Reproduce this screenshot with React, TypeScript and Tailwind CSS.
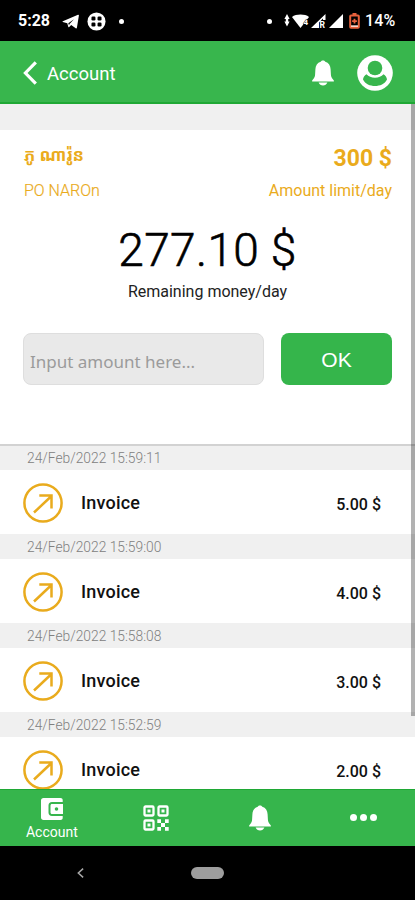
import React from 'react';

const invoices = [
  { date: '24/Feb/2022 15:59:11', amount: '5.00 $' },
  { date: '24/Feb/2022 15:59:00', amount: '4.00 $' },
  { date: '24/Feb/2022 15:58:08', amount: '3.00 $' },
  { date: '24/Feb/2022 15:52:59', amount: '2.00 $' },
];

function BellIcon({ className }: { className?: string }) {
  return (
    <svg viewBox="0 0 22 26" fill="currentColor" className={className}>
      <path d="M11 .4c-1 0-1.800.5-2.300 1.300C5.300 2.700 3.500 5.600 3.400 9.200l-.3 5.300c-.1 2-.7 3.300-2 4.800L.2 20.400c-.4.600-.1 1.200.6 1.200h20.400c.7 0 1-.6.6-1.200l-.9-1.100c-1.300-1.500-1.900-2.800-2-4.800l-.3-5.300c-.1-3.600-1.900-6.500-5.300-7.500C12.800.9 12 .4 11 .4z" />
      <path d="M6.600 22.600h8.800c-.8 1.800-2.400 3-4.400 3s-3.600-1.200-4.400-3z" />
    </svg>
  );
}

function StatusBar() {
  return (
    <div className="h-[41px] shrink-0 bg-black text-white flex items-center justify-between pt-px pl-[18px] pr-[19px]">
      <div className="flex items-center">
        <span className="w-[33px] text-base font-bold leading-none">5:28</span>
        <svg viewBox="0 0 17 15" className="ml-[11px] w-[17px] h-[15px]" fill="white">
          <path d="M.8 7.300 16 .8c.6-.2 1 .1.900.7l-2 12.200c-.1.700-.7.900-1.200.5l-4.500-3.300-2 2c-.4.400-.9.300-1-.3L5.300 9.200.8 8.100c-.5-.2-.5-.6 0-.8z" />
          <path d="M6.300 9.300 12 5.200 7.500 10l-.5 1.600z" fill="black" />
        </svg>
        <svg viewBox="0 0 20 20" className="ml-2 w-[19px] h-[19px]">
          <circle cx="10" cy="10" r="9.500" fill="white" />
          <g fill="black">
            <rect x="4.700" y="4.700" width="4.200" height="4.200" rx="1.300" />
            <rect x="11.100" y="4.700" width="4.200" height="4.200" rx="1.300" />
            <rect x="4.700" y="11.100" width="4.200" height="4.200" rx="1.300" />
            <rect x="11.100" y="11.100" width="4.200" height="4.200" rx="1.300" />
          </g>
        </svg>
        <span className="ml-[13px] w-[5px] h-[5px] rounded-full bg-white" />
      </div>
      <div className="flex items-center">
        <span className="w-[5px] h-[5px] rounded-full bg-white" />
        <svg viewBox="0 0 60 16" className="ml-[12px] w-[60px] h-4" fill="white">
          <path d="M3 1 5.600 6H.4zM3 13.500.4 8.500h5.200zM1.800 5h2.400v5H1.800z" />
          <path d="M8 4C12 .8 21 .8 25 4l-8.500 11z" />
          <text x="19.500" y="12" fontSize="8" fontWeight="700" fontFamily="Roboto, sans-serif" stroke="black" strokeWidth="1" paintOrder="stroke">4</text>
          <path d="M41.500 1v6h-2.500V5.500L35 9.500V15H27z" />
          <text x="35.500" y="15" fontSize="8.500" fontWeight="700" fontFamily="Roboto, sans-serif">R</text>
          <path d="M59 1v14H45z" />
        </svg>
        <svg viewBox="0 0 11 16" className="ml-[5px] w-[11px] h-4" fill="none">
          <path d="M3.500 0h4v2h-4z" fill="#e8613c" />
          <rect x="1.200" y="2.500" width="8.600" height="12.300" rx=".8" stroke="#e8613c" strokeWidth="2" />
          <path d="M5.500 5.800v4.800M3.100 8.200h4.800" stroke="#e8613c" strokeWidth="1.800" />
          <path d="M2 12.300h7v1.700H2z" fill="#f8d5c8" />
        </svg>
        <span className="ml-[5px] w-[31px] text-base font-medium leading-none tracking-[0.2px] whitespace-nowrap">14%</span>
      </div>
    </div>
  );
}

function Header() {
  return (
    <header className="h-[63px] shrink-0 bg-[#38b64d] border-b-2 border-[#1fa835] text-white flex items-center pt-[3px] pl-[23px] pr-[22px]">
      <svg viewBox="0 0 14 24" className="w-[14px] h-6" fill="none" stroke="white" strokeWidth="3.200">
        <path d="M12.800 1.300 2.400 12l10.400 10.700" />
      </svg>
      <h1 className="ml-[10px] mt-0.5 text-[18.5px] leading-none">Account</h1>
      <BellIcon className="ml-auto w-[22px] h-[26px]" />
      <svg viewBox="0 0 36 36" className="ml-[23px] w-9 h-9">
        <circle cx="18" cy="18" r="17.800" fill="white" />
        <circle cx="18" cy="13" r="7.300" fill="#38b64d" />
        <path d="M9.500 19.200c2 2.200 5 3.500 8.500 3.500s6.500-1.300 8.500-3.500c2 1 3.300 3 3.500 5.300C27.800 29 23 31 18 31S8.200 29 6 24.500c.2-2.300 1.500-4.300 3.500-5.300z" fill="#38b64d" />
      </svg>
    </header>
  );
}

function Summary() {
  return (
    <section className="h-[316px] shrink-0 bg-white border-b-2 border-[#d2d2d2] px-[23px] pt-4">
      <div className="flex justify-between text-[#eaab1c]">
        <div className="pl-px">
          <p className="h-6 text-[17px] leading-[18px] font-bold">ភូ ណារ៉ូន</p>
          <p className="mt-[11px] text-base leading-5 font-light [-webkit-text-stroke:0.2px_#eaab1c]">PO NAROn</p>
        </div>
        <div className="text-right">
          <p className="h-6 pt-px text-[23px] leading-6 font-bold">300 $</p>
          <p className="mt-[11px] text-base leading-5">Amount limit/day</p>
        </div>
      </div>
      <div className="text-center text-black">
        <p className="mt-[22px] text-[46px] leading-[54px] font-light tracking-[0.4px] [-webkit-text-stroke:0.6px_black]">277.10 $</p>
        <p className="mt-[5px] text-[16px] leading-5 text-[#222]">Remaining money/day</p>
      </div>
      <div className="mt-[31px] flex justify-between">
        <input
          type="text"
          placeholder="Input amount here..."
          className="w-[241px] h-[52px] rounded-lg border border-[#dedede] bg-[#e9e9e9] px-[6px] pt-1 font-['Noto_Sans',sans-serif] text-[17px] placeholder:text-[#9b9b9b] outline-none"
        />
        <button className="w-[111px] h-[52px] rounded-lg bg-[#35b54b] text-white font-['Liberation_Sans',sans-serif] text-[21px] pt-0.5">
          OK
        </button>
      </div>
    </section>
  );
}

function InvoiceRow({ date, amount }: { date: string; amount: string }) {
  return (
    <li className="shrink-0">
      <div className="h-[25px] pl-[27px] text-[13.8px] leading-[26px] font-light text-[#808080]">{date}</div>
      <div className="h-16 bg-white flex items-center pl-[23px] pr-[34px]">
        <svg viewBox="0 0 40 40" className="mt-0.5 w-10 h-10" fill="none" stroke="#e9ab1d">
          <circle cx="20" cy="20" r="18.600" strokeWidth="2.500" />
          <path d="M11 29.500 28.500 13M16.300 12.500h12.200v13" strokeWidth="2.500" />
        </svg>
        <span className="ml-[18px] text-[18px] tracking-[0.2px] font-medium text-[#111]">Invoice</span>
        <span className="ml-auto mt-[5px] text-base font-medium text-[#111]">{amount}</span>
      </div>
    </li>
  );
}

function BottomNav() {
  return (
    <nav className="h-[57px] shrink-0 bg-[#36b54c] border-t border-[#1fa835] text-white grid grid-cols-4">
      <div className="flex flex-col items-center pt-[7px]">
        <svg viewBox="0 0 24 24" className="w-6 h-6" fill="white">
          <path d="M3.500 1h17c1.300 0 2.200.8 2.200 2v2H12c-2.200 0-3.500 1.400-3.500 3.500v7c0 2.100 1.300 3.500 3.500 3.500h10.700v2c0 1.200-.9 2-2.200 2h-17C2 23 1 22 1 20.500v-17C1 2 2 1 3.500 1z" />
          <path fillRule="evenodd" d="M12 7h11v10H12c-1 0-1.500-.6-1.500-1.500v-7c0-.9.500-1.500 1.500-1.500zm4.500 3.200a1.800 1.800 0 1 0 0 3.600 1.800 1.800 0 0 0 0-3.600z" />
        </svg>
        <span className="mt-[3px] text-[14px] leading-4">Account</span>
      </div>
      <div className="flex justify-center items-center">
        <svg viewBox="0 0 26 26" className="w-[26px] h-[26px]">
          <g fill="none" stroke="white" strokeWidth="2.300">
            <rect x="1.500" y="1.500" width="9" height="9" rx="1" />
            <rect x="15.500" y="1.500" width="9" height="9" rx="1" />
            <rect x="1.500" y="15.500" width="9" height="9" rx="1" />
          </g>
          <path fill="white" d="M4.500 4.500h3v3h-3zM18.500 4.500h3v3h-3zM4.500 18.500h3v3h-3zM14.300 14.300h3.700v3.700h-3.700zM22 14.300h3.700v3.700H22zM18 18h4v4h-4zM14.300 22h3.700v3.700h-3.700zM22 22h3.700v3.700H22z" />
        </svg>
      </div>
      <div className="flex justify-center items-center pl-0.5">
        <BellIcon className="w-[22px] h-[26px]" />
      </div>
      <div className="flex justify-center items-center gap-[3px] pb-px">
        <span className="w-[7px] h-[7px] rounded-full bg-white" />
        <span className="w-[7px] h-[7px] rounded-full bg-white" />
        <span className="w-[7px] h-[7px] rounded-full bg-white" />
      </div>
    </nav>
  );
}

export default function App() {
  return (
    <div className="w-[415px] h-[900px] overflow-hidden flex flex-col bg-black font-[Roboto,'Noto_Sans_Khmer',sans-serif]">
      <StatusBar />
      <Header />
      <main className="relative h-[685px] shrink-0 overflow-hidden flex flex-col bg-[#f0f0f0] pt-[26px]">
        <Summary />
        <ul className="-mt-px">
          {invoices.map((invoice) => (
            <InvoiceRow key={invoice.date} date={invoice.date} amount={invoice.amount} />
          ))}
        </ul>
        <div className="absolute top-0 right-0 w-1 h-[612px] bg-black/30" />
      </main>
      <BottomNav />
      <div className="h-[54px] shrink-0 bg-black grid grid-cols-[1fr_33px_1fr] items-center">
        <svg viewBox="0 0 8 12" className="ml-[77px] w-[7px] h-3" fill="none" stroke="#a8a8a8" strokeWidth="1.700">
          <path d="M7 1 1.500 6 7 11" />
        </svg>
        <span className="h-3 rounded-full bg-[#9e9e9e]" />
      </div>
    </div>
  );
}
